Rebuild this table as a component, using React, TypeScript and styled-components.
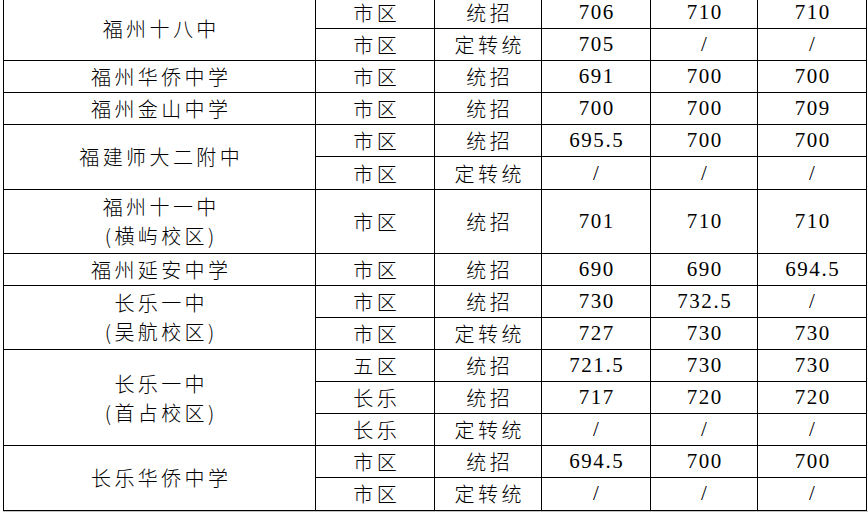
import React from 'react';
import styled, { createGlobalStyle } from 'styled-components';

const GlobalStyle = createGlobalStyle`
  html, body {
    margin: 0;
    padding: 0;
    background: #ffffff;
    overflow: hidden;
  }
  body {
    font-family: "Noto Sans CJK SC", sans-serif;
    color: #000;
  }
`;

const Page = styled.div`
  padding-left: 3px;
  margin-top: -4px;
`;

const Table = styled.table`
  border-collapse: collapse;
  table-layout: fixed;
  width: 864px;
`;

const Col = styled.col<{ w: number }>`
  width: ${({ w }) => w}px;
`;

const Row = styled.tr<{ tall?: boolean }>`
  height: ${({ tall }) => (tall ? '64.2px' : '32.1px')};
`;

const Cell = styled.td`
  border: 1px solid #000;
  padding: 0;
  text-align: center;
  vertical-align: middle;
  font-family: "Noto Sans CJK SC", sans-serif;
  font-size: 20px;
  font-weight: 300;
  line-height: 29px;
  color: #000;
  letter-spacing: 3.4px;
  text-indent: 3.4px;
  white-space: nowrap;
`;

const NumCell = styled(Cell)`
  font-family: "Liberation Serif", "Noto Sans", serif;
  font-size: 21px;
  font-weight: 400;
  letter-spacing: 1.6px;
  text-indent: 1.6px;
`;

const Bottom = styled.div`
  height: 3px;
  background: #c4c4c4;
`;

type Line = [string, string, string, string, string];
type Group = { school: string[]; lines: Line[]; tall?: boolean };

const widths = [312, 119, 107, 109, 107, 109];

const data: Group[] = [
  {
    school: ['福州十八中'],
    lines: [
      ['市区', '统招', '706', '710', '710'],
      ['市区', '定转统', '705', '/', '/'],
    ],
  },
  { school: ['福州华侨中学'], lines: [['市区', '统招', '691', '700', '700']] },
  { school: ['福州金山中学'], lines: [['市区', '统招', '700', '700', '709']] },
  {
    school: ['福建师大二附中'],
    lines: [
      ['市区', '统招', '695.5', '700', '700'],
      ['市区', '定转统', '/', '/', '/'],
    ],
  },
  {
    school: ['福州十一中', '(横屿校区)'],
    lines: [['市区', '统招', '701', '710', '710']],
    tall: true,
  },
  { school: ['福州延安中学'], lines: [['市区', '统招', '690', '690', '694.5']] },
  {
    school: ['长乐一中', '(吴航校区)'],
    lines: [
      ['市区', '统招', '730', '732.5', '/'],
      ['市区', '定转统', '727', '730', '730'],
    ],
  },
  {
    school: ['长乐一中', '(首占校区)'],
    lines: [
      ['五区', '统招', '721.5', '730', '730'],
      ['长乐', '统招', '717', '720', '720'],
      ['长乐', '定转统', '/', '/', '/'],
    ],
  },
  {
    school: ['长乐华侨中学'],
    lines: [
      ['市区', '统招', '694.5', '700', '700'],
      ['市区', '定转统', '/', '/', '/'],
    ],
  },
];

const App: React.FC = () => (
  <>
    <GlobalStyle />
    <Page>
      <Table>
        <colgroup>
          {widths.map((w, i) => (
            <Col key={i} w={w} />
          ))}
        </colgroup>
        <tbody>
          {data.map((g, gi) =>
            g.lines.map((line, li) => (
              <Row key={`${gi}-${li}`} tall={g.tall}>
                {li === 0 && (
                  <Cell rowSpan={g.lines.length}>
                    {g.school.map((s, si) => (
                      <div key={si}>{s}</div>
                    ))}
                  </Cell>
                )}
                <Cell>{line[0]}</Cell>
                <Cell>{line[1]}</Cell>
                <NumCell>{line[2]}</NumCell>
                <NumCell>{line[3]}</NumCell>
                <NumCell>{line[4]}</NumCell>
              </Row>
            ))
          )}
        </tbody>
      </Table>
      <Bottom />
    </Page>
  </>
);

export default App;
